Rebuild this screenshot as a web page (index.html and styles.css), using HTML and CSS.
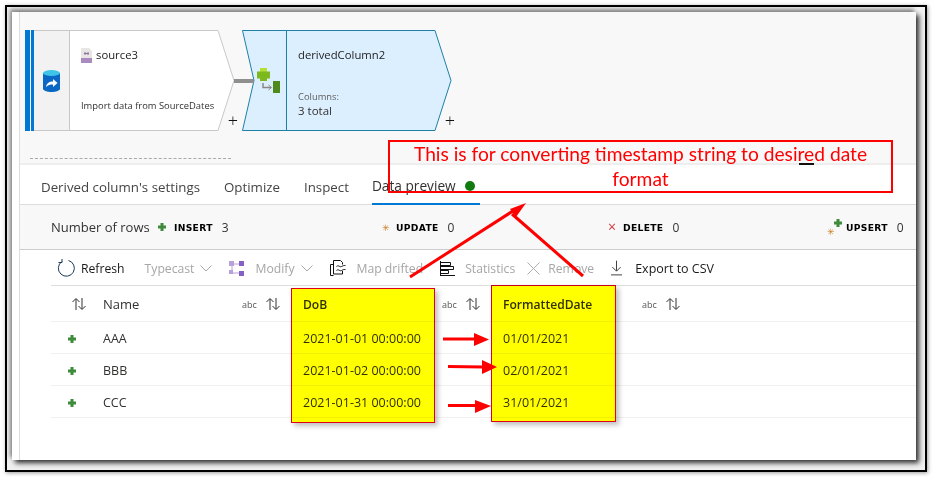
FILE: index.html
```html
<!DOCTYPE html>
<html lang="en">
<head>
    <meta charset="UTF-8">
    <title>Derived column data preview</title>
    <link rel="stylesheet" href="styles.css">
</head>
<body>
    <svg class="sprites" width="0" height="0">
        <symbol id="sort" viewBox="0 0 16 14">
            <path d="M5 13V2M1.500 5L5 1.500 8.500 5M11 1v11M7.500 9l3.500 3.500L14.500 9" fill="none" stroke="#323130" stroke-width="1"/>
        </symbol>
        <symbol id="plus" viewBox="0 0 8 8">
            <path d="M2.500 0h3v2.500H8v3H5.500V8h-3V5.500H0v-3h2.500z" fill="#3f8a3c"/>
        </symbol>
    </svg>

    <div class="frame">
        <div class="shot">
            <div class="pane">
                <div class="canvas">
                    <div class="graph">
                        <div class="node source">
                            <svg class="node-shape" viewBox="0 0 210 101" width="210" height="101">
                                <path d="M.5.500H193L209 50.500 193 100.500H.5z" fill="#fff" stroke="#c8c8c8"/>
                                <rect x="0" y="0" width="9" height="101" fill="#0078d4"/>
                                <rect x="5" y="0" width="1" height="101" fill="#fff"/>
                                <rect x="9" y="1" width="35" height="99" fill="#f2f2f2"/>
                                <rect x="44" y="1" width="1" height="99" fill="#c8c8c8"/>
                            </svg>
                            <div class="node-icon">
                                <svg width="17" height="22" viewBox="0 0 17 22">
                                    <path d="M0 3v16c0 1.500 4 3 8.500 3s8.500-1.500 8.500-3V3z" fill="#0a68c4"/>
                                    <ellipse cx="8.500" cy="3" rx="8.500" ry="3" fill="#3fc4e8"/>
                                    <path d="M3 17c.5-3.500 3-5.500 7-5.500V9l4.500 4-4.500 4v-2.500c-3 0-5 .5-7 2.500z" fill="#fff"/>
                                </svg>
                            </div>
                            <div class="node-body">
                                <div class="node-title">
                                    <svg width="11" height="15" viewBox="0 0 11 15">
                                        <path d="M0 0h8l3 3v12H0z" fill="#e8e6e3"/>
                                        <rect x="0" y="10" width="11" height="5" fill="#a98bc0"/>
                                        <path d="M4 4v3M7 4v3M3 5.500h5" stroke="#8e6fa8" fill="none"/>
                                    </svg>
                                    <span>source3</span>
                                </div>
                                <div class="node-note">Import data from SourceDates</div>
                            </div>
                            <span class="add">+</span>
                        </div>
                        <div class="link"></div>
                        <div class="node derived">
                            <svg class="node-shape" viewBox="0 0 210 101" width="210" height="101">
                                <path d="M.5.500H193L209 50.500 193 100.500H.5L12 50.500z" fill="#dcefff" stroke="#1f7fa6"/>
                                <path d="M44.500 1v99" stroke="#1f7fa6"/>
                            </svg>
                            <div class="node-icon">
                                <svg width="24" height="25" viewBox="0 0 24 25">
                                    <path d="M3 3h7v10H3zM0 3.500h13v7H0z" fill="#7cb81e"/>
                                    <path d="M3 0h7v3.500H3z" fill="#b4e034"/>
                                    <path d="M6 15v4.500h8" fill="none" stroke="#8a8886" stroke-width="1.500"/>
                                    <path d="M11.500 17l3 2.500-3 2.500" fill="none" stroke="#8a8886"/>
                                    <rect x="16" y="13" width="7" height="12" fill="#4f8a1c"/>
                                </svg>
                            </div>
                            <div class="node-body">
                                <div class="node-title">derivedColumn2</div>
                                <div class="node-meta">Columns:</div>
                                <div class="node-total">3 total</div>
                            </div>
                            <span class="add">+</span>
                        </div>
                    </div>
                    <div class="dashes"></div>
                </div>

                <div class="tabs">
                    <span class="tab">Derived column's settings</span>
                    <span class="tab">Optimize</span>
                    <span class="tab">Inspect</span>
                    <span class="tab active">Data preview <i class="dot"></i></span>
                </div>

                <div class="stats">
                    <span class="stats-label">Number of rows</span>
                    <div class="stat stat-insert">
                        <svg width="8" height="8"><use href="#plus"/></svg>
                        <b>INSERT</b><span>3</span>
                    </div>
                    <div class="stat stat-update">
                        <span class="star">✳</span>
                        <b>UPDATE</b><span>0</span>
                    </div>
                    <div class="stat stat-delete">
                        <span class="cross">×</span>
                        <b>DELETE</b><span>0</span>
                    </div>
                    <div class="stat stat-upsert">
                        <span class="upsert-icon"><span class="star">✳</span><svg width="8" height="8"><use href="#plus"/></svg></span>
                        <b>UPSERT</b><span>0</span>
                    </div>
                </div>

                <div class="toolbar">
                    <button class="tool refresh">
                        <svg width="18" height="18" viewBox="0 0 18 18"><path d="M5 2.500A8 8 0 1 0 11.500 1.500M5 0v3.500H1.500" fill="none" stroke="#1b3a57" stroke-width="1"/></svg>
                        Refresh
                    </button>
                    <button class="tool off typecast">Typecast <svg width="12" height="7" viewBox="0 0 12 7"><path d="M.5.500l5.500 5.500L11.500.500" fill="none" stroke="#a6a6a6"/></svg></button>
                    <button class="tool off modify">
                        <svg width="15" height="15" viewBox="0 0 15 15"><path d="M3 3h9M3 3v9h9" fill="none" stroke="#b8a0d8"/><rect width="5" height="5" fill="#b8a0d8"/><rect x="10" width="5" height="5" fill="#8661c5"/><rect x="10" y="10" width="5" height="5" fill="#8661c5"/><rect y="9" width="4" height="4" fill="#b8a0d8"/></svg>
                        Modify <svg class="chev" width="12" height="7" viewBox="0 0 12 7"><path d="M.5.500l5.500 5.500L11.500.500" fill="none" stroke="#a6a6a6"/></svg>
                    </button>
                    <button class="tool off drifted">
                        <svg width="16" height="17" viewBox="0 0 16 17"><path d="M3.500 15.500h-3v-11h3M3.500.500h7l2 2v2M3.500.500v13.500h9v-3" fill="none" stroke="#111"/><path d="M6.500 6.500c2-2 3 1 5 0s2-1 4-1M6.500 10.500c2-2 3 1 5 0s2-1 4-1" fill="none" stroke="#111"/></svg>
                        Map drifted
                    </button>
                    <button class="tool off statistics">
                        <svg width="15" height="15" viewBox="0 0 15 15"><path d="M.5 0v15M.5 14.500H15M.5 1.500h10v3H.5M.5 5.500h13v3H.5M.5 9.500h8v3h-8" fill="none" stroke="#111"/></svg>
                        Statistics
                    </button>
                    <button class="tool off remove">
                        <svg width="13" height="13" viewBox="0 0 14 14"><path d="M.5.500l13 13M13.500.500l-13 13" fill="none" stroke="#a6a6a6"/></svg>
                        Remove
                    </button>
                    <button class="tool export">
                        <svg width="11" height="16" viewBox="0 0 12 16"><path d="M6 0v11M1.500 7L6 11.500 10.500 7M0 15.500h12" fill="none" stroke="#323130"/></svg>
                        Export to CSV
                    </button>
                </div>

                <div class="grid">
                    <div class="grid-row grid-head">
                        <div class="c-mark"><svg width="16" height="14"><use href="#sort"/></svg></div>
                        <div class="c-name">Name</div>
                        <div class="c-type"><em>abc</em><svg width="16" height="14"><use href="#sort"/></svg></div>
                        <div class="c-dob">DoB</div>
                        <div class="c-type"><em>abc</em><svg width="16" height="14"><use href="#sort"/></svg></div>
                        <div class="c-fmt">FormattedDate</div>
                        <div class="c-type"><em>abc</em><svg width="16" height="14"><use href="#sort"/></svg></div>
                    </div>
                    <div class="grid-row">
                        <div class="c-mark"><svg width="8" height="8"><use href="#plus"/></svg></div>
                        <div class="c-name">AAA</div>
                        <div class="c-type"></div>
                        <div class="c-dob">2021-01-01 00:00:00</div>
                        <div class="c-type"></div>
                        <div class="c-fmt">01/01/2021</div>
                    </div>
                    <div class="grid-row">
                        <div class="c-mark"><svg width="8" height="8"><use href="#plus"/></svg></div>
                        <div class="c-name">BBB</div>
                        <div class="c-type"></div>
                        <div class="c-dob">2021-01-02 00:00:00</div>
                        <div class="c-type"></div>
                        <div class="c-fmt">02/01/2021</div>
                    </div>
                    <div class="grid-row">
                        <div class="c-mark"><svg width="8" height="8"><use href="#plus"/></svg></div>
                        <div class="c-name">CCC</div>
                        <div class="c-type"></div>
                        <div class="c-dob">2021-01-31 00:00:00</div>
                        <div class="c-type"></div>
                        <div class="c-fmt">31/01/2021</div>
                    </div>
                </div>
            </div>
        </div>
    </div>

    <!-- annotations drawn on top of the screenshot -->
    <div class="callout"><span>This is for converting timestamp string to desired date format</span></div>
    <div class="mark"></div>
    <div class="highlight hl-dob"></div>
    <div class="highlight hl-fmt"></div>
    <svg class="arrows" width="936" height="480" viewBox="0 0 936 480">
        <g stroke="#f00" stroke-width="3" fill="none">
            <path d="M410 277L516 209"/>
            <path d="M583 276L512 214"/>
            <path d="M443 339H476"/>
            <path d="M448 366.500L484 367"/>
            <path d="M448 405.500H480"/>
        </g>
        <g fill="#f00">
            <path d="M526 203L510 209 516 217z"/>
            <path d="M489 339.500L474 333V346z"/>
            <path d="M497 367L482 360V374z"/>
            <path d="M491 406L475 400V413z"/>
        </g>
    </svg>
</body>
</html>
```

FILE: styles.css
```css
html, body {
    margin: 0;
    padding: 0;
    background: #fff;
}
body {
    position: relative;
    width: 936px;
    height: 480px;
    overflow: hidden;
    font-family: "Open Sans", "Noto Sans", sans-serif;
    font-size: 12px;
    color: #323130;
}
.sprites {
    position: absolute;
}
svg {
    display: block;
    flex: none;
}

.frame {
    box-sizing: border-box;
    width: 922px;
    height: 467px;
    margin: 5px 0 0 5px;
    border: 2px solid #000;
    padding: 5px 0 0 5px;
    background: #f0f0f0;
    box-shadow: 1px 1px 4px rgba(0, 0, 0, .4);
    overflow: hidden;
}
.shot {
    width: 904px;
    height: 448px;
    padding-left: 7px;
    box-sizing: border-box;
    background: #fff;
    box-shadow: 3px 3px 5px #2e2e2e, -2px -3px 4px #8c8c8c;
}
.pane {
    height: 100%;
    border-left: 1px solid #ddd;
}

/* graph */
.canvas {
    box-sizing: border-box;
    height: 153px;
    padding: 18px 0 0 5px;
    background: #f8f8f8;
    border-bottom: 2px solid #eee;
}
.graph {
    display: flex;
    align-items: flex-start;
}
.node {
    position: relative;
    width: 210px;
    height: 101px;
    flex: none;
    display: flex;
}
.node-shape {
    position: absolute;
    left: 0;
    top: 0;
}
.node-icon {
    position: relative;
    box-sizing: border-box;
    width: 45px;
    padding: 40px 0 0 18px;
}
.derived .node-icon {
    padding: 38px 0 0 15px;
}
.node-body {
    position: relative;
    display: flex;
    flex-direction: column;
    padding: 17px 0 0 11px;
}
.node-title {
    display: flex;
    align-items: center;
    gap: 4px;
    font-size: 11.300px;
    line-height: 16px;
    color: #222;
}
.node-note {
    margin-top: 36px;
    font-size: 9.400px;
    line-height: 14px;
}
.node-meta {
    margin-top: 27px;
    font-size: 9.400px;
    line-height: 13px;
    color: #605e5c;
}
.node-total {
    margin-top: 0;
    font-size: 11.500px;
    line-height: 16px;
}
.add {
    position: absolute;
    right: -3px;
    bottom: 3px;
    font-size: 18px;
    font-weight: 300;
    line-height: 16px;
    color: #111;
}
.link {
    width: 20px;
    height: 4px;
    margin: 49px -12px 0 -1px;
    background: #8f8f8f;
    flex: none;
    position: relative;
    z-index: 1;
}
.dashes {
    width: 201px;
    margin: 27px 0 0 5px;
    border-top: 1px dashed #a9a9a9;
}

/* tabs */
.tabs {
    display: flex;
    height: 40px;
    padding-left: 21px;
    gap: 24px;
    border-bottom: 1px solid #ddd;
    box-sizing: border-box;
}
.tab {
    font-size: 13.300px;
    line-height: 44px;
    color: #444;
}
.tab.active {
    display: flex;
    align-items: center;
    gap: 9px;
    height: 40px;
    margin-left: -1px;
    padding-top: 4px;
    box-sizing: border-box;
    width: 108px;
    font-size: 13.700px;
    border-bottom: 2px solid #0078d4;
    color: #323130;
}
.dot {
    width: 10px;
    height: 10px;
    border-radius: 50%;
    background: #107c10;
}

/* row counts */
.stats {
    display: flex;
    align-items: center;
    height: 45px;
    box-sizing: border-box;
    padding-left: 31px;
    background: #f8f8f8;
    border-bottom: 1px solid #ccc;
}
.stats-label {
    font-size: 13px;
    width: 107px;
    color: #333;
}
.stat {
    display: flex;
    align-items: center;
    font-size: 12px;
}
.stat b {
    font-family: "DejaVu Sans", sans-serif;
    font-size: 9.200px;
    letter-spacing: .3px;
    margin: 0 9px 0 8px;
    color: #000;
}
.stat-insert {
    width: 224px;
}
.stat-update {
    width: 226px;
}
.stat-update b {
    margin-left: 6px;
}
.stat-delete {
    width: 219px;
}
.stat-delete b {
    margin-left: 7px;
}
.star {
    color: #c97a1e;
    font-size: 9px;
    line-height: 9px;
}
.cross {
    color: #d13438;
    font-size: 14px;
    line-height: 10px;
}
.upsert-icon {
    position: relative;
    display: block;
    width: 15px;
    height: 14px;
}
.upsert-icon .star {
    position: absolute;
    left: 0;
    bottom: -2px;
}
.upsert-icon svg {
    position: absolute;
    right: 0;
    top: -1px;
}
.stat-upsert b {
    margin-left: 4px;
}

/* toolbar */
.toolbar {
    display: flex;
    align-items: center;
    height: 36px;
    box-sizing: border-box;
    margin-left: 31px;
    padding: 1px 0 0 6px;
    border-bottom: 1px solid #ddd;
}
.tool {
    display: flex;
    align-items: center;
    gap: 6px;
    padding: 0;
    border: none;
    background: none;
    font-family: inherit;
    font-size: 12.200px;
    color: #1a1a1a;
    white-space: nowrap;
}
.tool.off {
    color: #a6a6a6;
}
.typecast {
    margin-left: 20px;
}
.modify {
    margin-left: 17px;
    gap: 11px;
}
.chev {
    margin-left: -5px;
}
.drifted {
    margin-left: 17px;
    gap: 11px;
}
.statistics {
    margin-left: 17px;
    gap: 10px;
}
.remove {
    margin-left: 12px;
    gap: 8px;
}
.export {
    margin-left: 17px;
    gap: 13px;
    font-size: 12.500px;
}

/* table */
.grid {
    margin-left: 31px;
    font-size: 12.500px;
}
.grid-row {
    display: flex;
    align-items: center;
    height: 32px;
    padding-top: 2px;
    box-sizing: border-box;
    border-bottom: 1px solid #f0f0f0;
}
.grid-head {
    height: 36px;
    padding-top: 1px;
    font-size: 12.100px;
    font-weight: 600;
}
.grid-head .c-name {
    font-size: 13px;
    font-weight: 400;
}
.c-mark {
    width: 52px;
    padding-left: 17px;
    box-sizing: border-box;
}
.grid-head .c-mark {
    padding-left: 20px;
}
.c-name {
    width: 139px;
}
.c-type {
    width: 61px;
    display: flex;
    align-items: center;
    gap: 8px;
}
.c-type em {
    font-style: normal;
    font-size: 9px;
    font-weight: 400;
    color: #555;
}
.c-dob {
    width: 139px;
}
.c-fmt {
    width: 139px;
}

/* annotations */
.callout {
    position: absolute;
    left: 388px;
    top: 140px;
    box-sizing: border-box;
    width: 505px;
    height: 53px;
    padding: 0 10px;
    border: 2px solid #f00;
    font-family: Lato, "Open Sans", sans-serif;
    font-size: 19.200px;
    line-height: 25px;
    text-align: center;
    color: #f00;
}
.callout span {
    display: block;
    margin-top: -1px;
}
.mark {
    position: absolute;
    left: 799px;
    top: 163px;
    width: 15px;
    height: 2px;
    background: #111;
}
.highlight {
    position: absolute;
    box-sizing: border-box;
    background: #ff0;
    border: 1px solid #e0001a;
    box-shadow: 3px 3px 5px rgba(0, 0, 0, .25);
    mix-blend-mode: multiply;
}
.hl-dob {
    left: 291px;
    top: 288px;
    width: 144px;
    height: 135px;
}
.hl-fmt {
    left: 491px;
    top: 285px;
    width: 125px;
    height: 137px;
}
.arrows {
    position: absolute;
    left: 0;
    top: 0;
}
```
